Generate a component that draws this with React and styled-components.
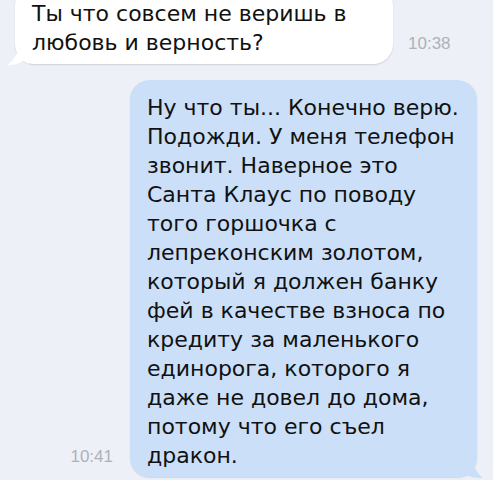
import React from "react";
import styled, { createGlobalStyle } from "styled-components";

const GlobalStyle = createGlobalStyle`
  html, body {
    margin: 0;
    padding: 0;
    background: #edf0f6;
  }
  body {
    font-family: "Liberation Sans", Arial, sans-serif;
    overflow: hidden;
  }
`;

const Screen = styled.div`
  width: 493px;
  height: 480px;
  overflow: hidden;
  background: #edf0f6;
  display: flex;
  flex-direction: column;
  gap: 16px;
  padding: 0 16px 0 15px;
  box-sizing: border-box;
`;

const Row = styled.div`
  display: flex;
  align-items: flex-end;
  justify-content: ${(p) => (p.$mine ? "flex-end" : "flex-start")};
  gap: ${(p) => (p.$mine ? "17px" : "15px")};
`;

const Bubble = styled.div`
  position: relative;
  box-sizing: border-box;
  width: ${(p) => p.$width}px;
  margin-top: ${(p) => p.$top || 0}px;
  padding: 13px 12px 7px 17px;
  border-radius: 20px;
  background: ${(p) => (p.$mine ? "#cbdff8" : "#ffffff")};
  box-shadow: 0 1px 1.5px rgba(90, 100, 120, ${(p) => (p.$mine ? 0.18 : 0.22)});
  color: #111;
  font-family: "DejaVu Sans", "Liberation Sans", sans-serif;
  font-size: 22px;
  line-height: 29px;
`;

const Tail = styled.svg`
  position: absolute;
  bottom: -1px;
  ${(p) => (p.$mine ? "right: -6px;" : "left: -8px;")}
  width: 22px;
  height: 18px;
  overflow: visible;
`;

const Time = styled.span`
  flex: none;
  margin-bottom: 10px;
  font-size: 17px;
  line-height: 20px;
  color: #aeb2ba;
`;

function Message({ mine, width, top, time, children }) {
  const bubble = (
    <Bubble $mine={mine} $width={width} $top={top}>
      {mine ? (
        <Tail $mine viewBox="0 0 22 18">
          <path d="M0 0 L8 0 C14 4 14 12 22 18 C14 18.5 8 17 4 14 L0 17 Z" fill="#cbdff8" />
        </Tail>
      ) : (
        <Tail viewBox="0 0 22 18">
          <path d="M22 0 L12 0 C10 8 6 14 0 18 C6 18.5 12 17 16 14 L22 17 Z" fill="#ffffff" />
        </Tail>
      )}
      {children}
    </Bubble>
  );
  const stamp = <Time>{time}</Time>;
  return (
    <Row $mine={mine}>
      {mine ? stamp : bubble}
      {mine ? bubble : stamp}
    </Row>
  );
}

export default function App() {
  return (
    <>
      <GlobalStyle />
      <Screen>
        <Message width={378} top={-14} time="10:38">
          Ты что совсем не веришь в любовь и верность?
        </Message>
        <Message mine width={347} time="10:41">
          Ну что ты... Конечно верю. Подожди. У меня телефон звонит. Наверное
          это Санта Клаус по поводу того горшочка с лепреконским золотом,
          который я должен банку фей в качестве взноса по кредиту за
          маленького единорога, которого я даже не довел до дома, потому что
          его съел дракон.
        </Message>
      </Screen>
    </>
  );
}
